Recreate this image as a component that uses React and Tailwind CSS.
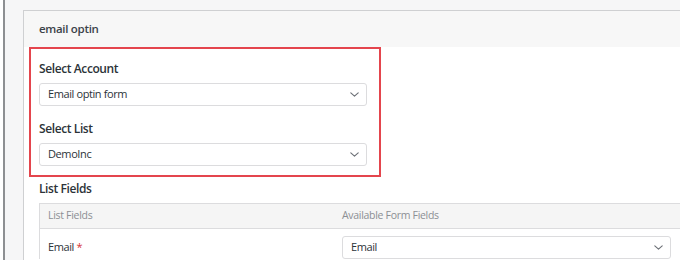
import React from 'react'

const Chevron = () => (
  <svg width="9" height="5" viewBox="0 0 9 5" fill="none" className="shrink-0">
    <path d="M0.8 0.8l3.7 3.4 3.7-3.4" stroke="#6b6f75" strokeWidth="1.1" strokeLinecap="round" strokeLinejoin="round" />
  </svg>
)

const SelectBox = ({ value, className = '' }) => (
  <div className={`h-[23px] flex items-center justify-between pl-2 pr-[7px] rounded-[3px] border border-[#dcdcde] bg-white text-[11px] tracking-[-0.4px] text-[#2c3338] ${className}`}>
    <span>{value}</span>
    <Chevron />
  </div>
)

const App = () => {
  return (
    <div className="w-[680px] h-[260px] overflow-hidden bg-[#f6f6f7] flex" style={{ fontFamily: '"Open Sans", "Noto Sans", sans-serif' }}>
      {/* left rule */}
      <div className="w-[3px] shrink-0 bg-white" />
      <div className="w-[2px] shrink-0 bg-[#8d8f92]" />

      <div className="flex-1 pl-[18px] pt-[10px]">
        <div className="w-[700px] h-[260px] border-t border-l border-[#cfd0d2] bg-white flex flex-col">

          {/* Panel Header */}
          <div className="h-[36px] shrink-0 bg-[#f7f7f7] flex items-center pl-[15px] text-[11.5px] tracking-[-0.3px] font-semibold text-[#3c434a]">
            email optin
          </div>

          {/* Highlighted block */}
          <div className="ml-[5px] w-[352px] border-2 border-[#e4454d] pl-[8px] pr-[12px] pt-[11px] pb-[9px] flex flex-col">
            <p className="text-[12px] tracking-[-0.4px] font-semibold text-[#2c3338] leading-[18px]">Select Account</p>
            <SelectBox value="Email optin form" className="mt-[5px]" />
            <p className="text-[12px] tracking-[-0.4px] font-semibold text-[#2c3338] leading-[18px] mt-[14px]">Select List</p>
            <SelectBox value="DemoInc" className="mt-[5px]" />
          </div>

          {/* List Fields */}
          <div className="pl-[15px] pt-[3px]">
            <p className="text-[12px] tracking-[-0.4px] font-semibold text-[#2c3338] leading-[18px]">List Fields</p>
            <div className="mt-[5px] border-t border-l border-[#dcdcde]">
              <div className="h-[25px] bg-[#f5f5f5] border-b border-[#dcdcde] flex items-center text-[10.5px] tracking-[-0.3px] text-[#8c8f94]">
                <span className="w-[294px] pl-2">List Fields</span>
                <span className="pl-2">Available Form Fields</span>
              </div>
              <div className="flex items-center pt-[7px]">
                <span className="w-[294px] pl-2 text-[11px] tracking-[-0.4px] text-[#2c3338]">
                  Email <span className="text-[#d63638]">*</span>
                </span>
                <div className="pl-2">
                  <SelectBox value="Email" className="w-[329px]" />
                </div>
              </div>
            </div>
          </div>

        </div>
      </div>
    </div>
  )
}

export default App
